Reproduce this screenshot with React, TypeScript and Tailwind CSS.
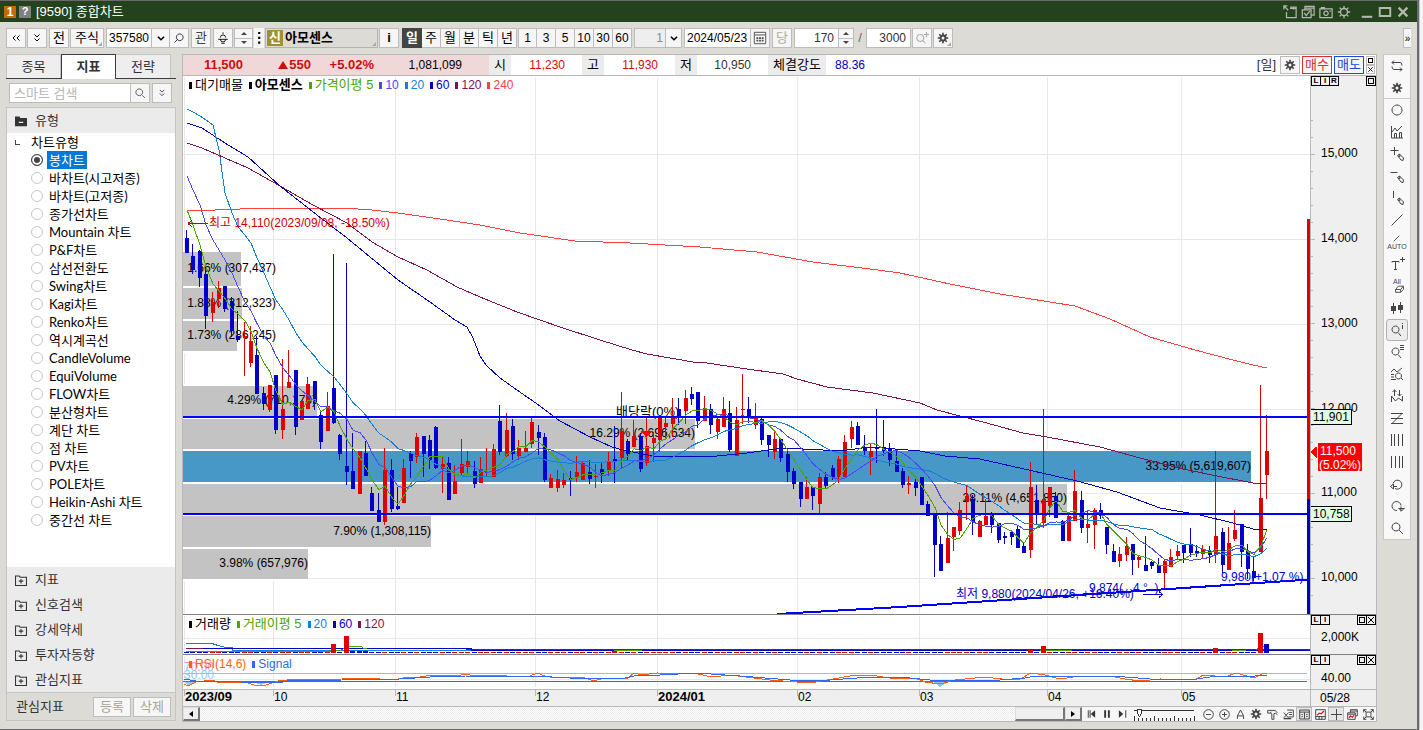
import React from "react";

type Bar = [string, number, number, number, number];

/* colour, high, body top, body bottom, low - in canvas units */
const BARS: Bar[] = `b 230 238 253 253|b 244 256 270 274|b 250 251 278 287|b 270 274 316 329|r 292 302 313 322|r 281 288 299 308|b 286 286 309 312|b 297 301 331 337|b 311 336 340 342|r 322 336 338 376|r 326 341 363 367|b 336 355 394 394|b 387 393 404 410|r 385 385 410 412|b 375 375 430 434|r 359 409 430 439|r 350 382 388 388|b 370 370 427 435|r 400 401 420 420|r 377 384 409 409|b 381 381 404 410|b 410 415 442 449|r 392 406 431 431|b 254 388 423 424|b 434 435 454 460|b 263 466 472 485|b 433 471 489 489|r 451 451 494 494|b 441 453 476 476|b 487 493 511 511|b 493 510 522 522|r 448 470 522 525|b 459 470 509 512|b 487 506 509 510|r 459 468 503 503|b 451 453 461 478|r 433 437 457 463|b 436 436 454 477|b 435 440 460 469|b 426 427 468 469|r 457 464 469 493|b 457 463 500 500|r 465 481 494 494|r 439 464 473 475|r 451 461 467 473|b 461 471 484 488|r 457 469 483 483|r 448 472 473 476|r 444 449 477 477|b 405 421 452 455|r 413 430 456 457|b 419 426 454 460|r 440 448 456 460|r 431 448 452 452|r 418 422 444 448|b 425 432 438 455|b 433 437 480 482|r 474 478 488 488|r 470 479 488 492|r 473 480 485 488|b 471 478 480 496|r 456 472 477 482|r 462 463 480 480|b 460 472 479 484|r 464 476 477 488|b 463 469 474 483|r 452 461 470 476|b 426 459 462 483|r 392 431 458 469|b 439 441 454 460|r 420 436 447 447|b 433 436 469 472|r 438 446 463 466|r 432 438 443 462|r 418 418 440 452|r 418 423 427 438|r 398 418 424 437|b 398 409 417 425|r 390 398 411 424|b 387 394 399 405|b 392 392 421 428|r 396 408 421 421|b 404 409 425 434|r 416 419 432 439|r 397 409 427 427|b 401 413 450 452|r 407 420 456 456|r 374 409 410 424|b 397 409 417 423|r 403 417 425 429|b 417 419 440 445|b 435 435 445 457|r 430 439 452 459|b 439 439 458 462|b 450 454 472 482|b 468 471 484 489|b 482 482 499 507|r 477 487 499 499|b 486 487 496 510|r 473 477 504 513|b 472 477 486 488|b 465 468 477 480|r 456 459 477 483|r 435 442 477 477|r 421 427 439 448|b 422 426 445 445|b 435 448 451 455|r 443 451 457 475|b 409 447 449 463|b 420 447 451 456|b 443 448 460 466|b 451 461 472 472|b 468 471 485 488|r 476 483 485 494|b 479 482 488 496|b 477 477 505 505|b 501 504 516 516|b 513 513 545 577|b 536 544 571 571|r 512 538 563 563|r 527 527 537 551|r 502 510 531 535|r 485 496 501 520|b 495 499 522 535|r 520 521 537 537|r 499 516 525 525|b 512 515 525 533|b 523 523 540 543|b 532 536 538 544|b 532 532 537 545|b 525 529 548 548|b 542 546 553 553|r 462 487 550 558|b 485 500 513 525|r 409 499 523 528|r 487 487 506 517|b 492 496 518 518|b 520 521 541 541|r 515 516 541 541|r 470 491 521 521|b 491 500 528 533|r 511 524 528 543|r 508 510 525 549|b 503 510 516 519|b 527 527 545 554|b 544 551 562 562|r 547 554 561 567|r 537 546 555 561|b 544 544 560 575|r 555 557 560 568|b 536 565 571 571|b 561 562 566 569|b 558 565 573 573|r 560 561 573 588|r 549 557 567 567|r 545 551 556 560|b 545 545 553 563|b 528 544 553 557|b 545 551 554 557|r 545 549 554 559|b 546 551 555 563|r 451 536 555 563|b 528 532 565 573|r 527 543 570 570|r 510 530 539 541|b 524 524 552 567|b 544 551 569 579|b 556 571 578 581|r 385 498 552 552|r 415 451 475 499`
  .split("|")
  .map((s) => {
    const [c, ...n] = s.split(" ");
    return [c, ...n.map(Number)] as Bar;
  });

const xAt = (i: number) => 187 + Math.round(i * 6.392);
const CLOSE = BARS.map((b) => (b[0] === "r" ? b[2] : b[3]));

function average(period: number, lead: number[]) {
  return CLOSE.map((_, i) => {
    const y = i < lead.length ? lead[i] : CLOSE.slice(i - period + 1, i + 1).reduce((a, b) => a + b, 0) / period;
    return `${xAt(i)},${Math.round(y * 10) / 10}`;
  }).join(" ");
}

const MA5 = average(5, [210, 225, 245, 267]);
const MA10 = average(10, [176, 190, 205, 225, 240, 250, 260, 273, 287]);
const MA20 = average(20, [109, 112, 116, 120, 125, 150, 193, 213, 227, 235, 243, 258, 273, 287, 300, 310, 320, 333, 342]);
const MA60 =
  "187,123 202,128 225,143 248,157 280,186 317,215 347,238 398,280 430,302 455,320 467,327 473,338 480,356 486,365 500,378 517,390 540,406 560,421 590,437 612,447 623,450 653,456 707,457 747,453 783,448 823,450 847,450 870,447 920,451 945,456 980,459 1033,471 1077,481 1117,492 1160,508 1200,515 1233,523 1253,529 1267,529";
const MA120 =
  "187,143 202,148 225,158 248,168 280,186 313,205 347,223 372,242 398,257 427,270 457,287 480,297 517,312 560,327 600,340 632,350 647,354 693,362 707,363 747,369 783,374 797,379 827,387 873,393 920,403 937,410 983,422 1023,433 1047,437 1100,447 1140,458 1183,469 1217,476 1253,483 1267,483";
const MA240 =
  "187,210 215,210 265,208 343,208 372,210 398,213 440,219 480,225 520,233 575,241 630,243 700,247 757,252 813,262 870,269 900,273 950,284 1000,294 1075,306 1110,319 1150,337 1195,350 1233,360 1253,365 1267,368";

const GRID_X = [184, 273, 395, 535, 657, 797, 919, 1047, 1181];
const GRID_Y = [154, 239, 324, 409, 493, 578];

const ZONES: [number, number, number, string, string, number][] = [
  [252, 34, 58, "#c3c3c3", "1.66% (307,437)", 276],
  [288, 31, 59, "#c3c3c3", "1.88% (312,323)", 276],
  [321, 30, 54, "#c3c3c3", "1.73% (286,245)", 276],
  [386, 30, 134, "#c3c3c3", "4.29% (710,178)", 316],
  [419, 30, 512, "#c3c3c3", "16.29% (2,696,634)", 695],
  [451, 31, 1068, "#4798c7", "33.95% (5,619,607)", 1251],
  [484, 30, 884, "#c3c3c3", "28.11% (4,651,850)", 1067],
  [516, 31, 248, "#c3c3c3", "7.90% (1,308,115)", 431],
  [549, 30, 125, "#c3c3c3", "3.98% (657,976)", 308],
];

function GridX({ y1, y2 }: { y1: number; y2: number }) {
  return (
    <>
      {GRID_X.map((x) => (
        <rect key={x} x={x} y={y1} width="1" height={y2 - y1} fill="#e8e8e8" />
      ))}
    </>
  );
}

function PriceChart() {
  return (
    <svg className="block h-[538px] w-full text-xs" role="img" aria-label="가격 차트">
      <g transform="translate(-183,-76)" shapeRendering="crispEdges">
        <GridX y1={77} y2={613} />
        {GRID_Y.map((y) => (
          <rect key={y} x="183" y={y} width="1127" height="1" fill="#e8e8e8" />
        ))}
        {ZONES.map(([y, h, w, c]) => (
          <g key={y}>
            <rect x="183" y={y - 2} width={w} height={h + 4} fill="#fff" />
            <rect x="183" y={y} width={w} height={h} fill={c} />
          </g>
        ))}
        {ZONES.map(([y, h, , , t, x]) => (
          <text key={y} x={x} y={y + h / 2 + 3} textAnchor="end" fill="#000">
            {t}
          </text>
        ))}
        <text x="616" y="416" fill="#000" className="text-[13px]">배당락(0%)</text>
        {BARS.map(([c, hi, top, bot, lo], i) => (
          <g key={i} fill={c === "r" ? "#e00000" : "#0000c8"}>
            <rect x={xAt(i) - 1} y={hi} width="1" height={Math.max(lo - hi, 1)} />
            <rect x={xAt(i) - 2} y={top} width="4" height={bot - top} />
          </g>
        ))}
        <g fill="none" strokeWidth="1">
          <polyline points={MA240} stroke="#ff4040" />
          <polyline points={MA120} stroke="#7b1450" />
          <polyline points={MA60} stroke="#0000c0" />
          <polyline points={MA20} stroke="#1080d8" />
          <polyline points={MA10} stroke="#4a4af8" />
          <polyline points={MA5} stroke="#4ea400" />
        </g>
        <rect x="646" y="418" width="1" height="14" fill="#e00000" />
        <path d="M641 431h11l-5.500 6z" fill="#f00" />
        <rect x="183" y="416" width="1124" height="2" fill="#00f" />
        <rect x="183" y="513" width="1124" height="2" fill="#00f" />
        <path d="M777 614L900 607L1310 579.500" stroke="#00f" strokeWidth="2" fill="none" />
        <rect x="1307" y="219" width="3" height="280" fill="#e00000" />
        <rect x="1307" y="499" width="3" height="116" fill="#0000c8" />
        <path d="M188 223.500h20M188 223.500l4-3M188 223.500l4 3" stroke="#d00000" fill="none" />
        <text x="209" y="227" fill="#d00000">최고 14,110(2023/09/08, -18.50%)</text>
        <text x="956" y="598" fill="#0000c0">최저 9,880(2024/04/26, +16.40%)</text>
        <path d="M1143 594.500h20M1163 594.500l-4-3M1163 594.500l-4 3" stroke="#0000c0" fill="none" />
        <text x="1089" y="592" fill="#0000e0">9,874({"\u00a0\u00a0\u00a0"}4 °{"\u00a0\u00a0"})</text>
        <text x="1221" y="581" fill="#0000e0">9,980(+1.07 %)</text>
      </g>
    </svg>
  );
}

const TICKS = Array.from({ length: 30 }, (_, i) => Math.round(120 + i * 16.95)).filter((y) => y < 612);

function PriceAxis() {
  return (
    <svg className="block h-[538px] w-full text-xs" role="img" aria-label="가격 축">
      <g transform="translate(-1311,-76)" shapeRendering="crispEdges">
        {TICKS.map((y) => (
          <rect key={y} x="1311" y={y} width={GRID_Y.some((g) => Math.abs(g - y) < 2) ? 4 : 2} height="1" fill="#b8b8b8" />
        ))}
        {["15,000", "14,000", "13,000", "12,000", "11,000", "10,000"].map((t, i) => (
          <text key={t} x="1321" y={[157, 242, 327, 412, 496, 581][i]} fill="#000">
            {t}
          </text>
        ))}
        <rect x="1311" y="409" width="41" height="16" fill="#000" />
        <rect x="1311" y="410" width="40" height="14" fill="#e0ffe0" />
        <text x="1313" y="421">11,901</text>
        <rect x="1311" y="506" width="41" height="16" fill="#000" />
        <rect x="1311" y="507" width="40" height="14" fill="#e0ffe0" />
        <text x="1313" y="518">10,758</text>
        <path d="M1310.500 452l6-5.500v11z" fill="#f00" />
        <rect x="1318" y="443" width="44" height="28" fill="#f00" />
        <text x="1320" y="455" fill="#fff">11,500</text>
        <text x="1319" y="469" fill="#fff">(5.02%)</text>
      </g>
    </svg>
  );
}

const VOL: Record<number, number> = { 23: 9, 25: 17, 26: 2, 27: 2, 28: 2, 67: 2, 132: 3, 134: 7, 161: 5, 168: 20, 169: 9 };

function VolumeChart() {
  return (
    <svg className="block h-[39px] w-full" role="img" aria-label="거래량 차트">
      <g transform="translate(-183,-615)" shapeRendering="crispEdges">
        <GridX y1={616} y2={653} />
        <rect x="183" y="638" width="1127" height="1" fill="#e8e8e8" />
        <path d="M186 643.500h26l6 2 8 2h6v3h240" stroke="#1080d8" fill="none" />
        <path d="M186 648.500h280l1 1h843" stroke="#7b1450" fill="none" />
        <path d="M203 648.500h268v2h839" stroke="#0000c0" fill="none" />
        <path d="M186 651.500h144v-1h10l9-4h12l3 2h3M614 650.500h28M1040 650.500h32M1232 650.500h14M1256 649.500l4-2 8-2" stroke="#4ea400" fill="none" />
        {BARS.map(([c], i) => {
          const h = VOL[i] ?? 1;
          const blue = [26, 27, 28, 169].includes(i) || (!VOL[i] && c === "b");
          return <rect key={i} x={xAt(i) - 3} y={653 - h} width="5" height={h} fill={blue ? "#0000c8" : "#e00000"} />;
        })}
      </g>
    </svg>
  );
}

function RsiChart() {
  return (
    <svg className="block h-[34px] w-full text-xs" role="img" aria-label="RSI 차트">
      <g transform="translate(-183,-655)" shapeRendering="crispEdges">
        <GridX y1={656} y2={687} />
        <rect x="183" y="679" width="1127" height="1" fill="#e8e8e8" />
        <text x="184" y="671" fill="#ff90c8">70.00</text>
        <text x="184" y="679" fill="#90c8ff">30.00</text>
        <path d="M184 681h12l-8 5zM250 681h22l-11 4zM932 681h18l-10 6z" fill="#90c8f0" />
        <rect x="183" y="673" width="1124" height="1" fill="#ff90c8" />
        <rect x="183" y="681" width="1124" height="1" fill="#f0f" />
        <polyline
          fill="none"
          stroke="#ff6010"
          points="184,684 188,686 196,682 212,680 220,683 245,682 254,685 266,685 278,681 287,680 342,679 357,678 376,678 384,680 398,679 409,677 420,677 432,675 456,676 466,674 474,676 500,675 513,677 530,676 537,673 545,676 556,678 572,677 585,678 594,681 604,678 628,678 634,673 642,675 657,673 698,674 712,677 730,675 770,680 810,683 850,676 870,675 890,678 915,678 925,682 940,684 955,680 985,677 1010,680 1020,679 1031,673 1045,675 1060,679 1080,676 1110,676 1125,679 1140,681 1160,679 1195,680 1203,675 1215,676 1225,677 1236,673 1254,678 1262,674 1267,673"
        />
        <polyline
          fill="none"
          stroke="#3068f8"
          points="184,679 196,681 240,682 278,683 287,681 342,680 400,679 430,677 466,676 530,676 552,677 570,678 593,679 625,678 634,676 660,675 696,673 740,676 790,680 830,680 870,677 900,677 930,680 960,680 1000,680 1025,678 1036,676 1100,676 1125,677 1150,679 1190,680 1210,677 1235,676 1255,676 1267,675"
        />
      </g>
    </svg>
  );
}

/* ---------- small glyphs ---------- */

function Icon({ d, fill, size = "h-4 w-4", sw = 1 }: { d: string; fill?: string; size?: string; sw?: number }) {
  return (
    <svg viewBox="0 0 16 16" className={`${size} shrink-0`} fill="none" stroke="currentColor" strokeWidth={sw} aria-hidden="true">
      <path d={d} />
      {fill && <path d={fill} fill="currentColor" stroke="none" />}
    </svg>
  );
}

const D = {
  left2: "M7.500 5.500L5 8l2.500 2.500M11.500 5.500L9 8l2.500 2.500",
  down2: "M5.500 4.500L8 7l2.500-2.500M5.500 8.500L8 11l2.500-2.500",
  search: "M11 11l3.500 3.500M7 2.500a4.500 4.500 0 1 0 .01 0z",
  searchR: "M6 10l-4 4M9 2.500a4.500 4.500 0 1 0 .01 0z",
  close: "M3 3l10 10M13 3L3 13",
};

function Gear({ size = "h-4 w-4", light }: { size?: string; light?: boolean }) {
  return (
    <svg viewBox="0 0 16 16" className={`${size} shrink-0`} fill="none" stroke="currentColor" aria-hidden="true">
      <circle cx="8" cy="8" r={light ? 4 : 3.3} strokeWidth={light ? 1.5 : 2.6} />
      <path
        d="M8 1v3M8 12v3M1 8h3M12 8h3M3 3l2 2M11 11l2 2M13 3l-2 2M5 11l-2 2"
        strokeWidth={light ? 1.6 : 2.2}
      />
    </svg>
  );
}

const SHAPE = "flex h-5 shrink-0 items-center justify-center";
const BTN = `${SHAPE} border border-[#bcbcbc] bg-[#f6f6f6]`;

function Btn({ w, label, children, className = "" }: { w: string; label?: string; children: React.ReactNode; className?: string }) {
  return (
    <button type="button" aria-label={label} className={`${BTN} ${w} ${className}`}>
      {children}
    </button>
  );
}

function Drop({ w, label }: { w: string; label: string }) {
  return (
    <Btn w={w} label={label} className="-ml-px">
      <Icon d="M4.500 6.500L8 10l3.500-3.500" sw={1.8} size="h-[14px] w-[14px]" />
    </Btn>
  );
}

function Spin({ w, label }: { w: string; label: string }) {
  return (
    <div className={`flex h-5 flex-col border border-[#bcbcbc] bg-[#f6f6f6] ${w}`}>
      <button type="button" aria-label={`${label} 증가`} className="flex flex-1 items-center justify-center border-b border-[#bcbcbc]">
        <svg viewBox="0 0 6 3" className="h-[3px] w-[6px]"><path d="M0 3l3-3 3 3z" fill="#444" /></svg>
      </button>
      <button type="button" aria-label={`${label} 감소`} className="flex flex-1 items-center justify-center">
        <svg viewBox="0 0 6 3" className="h-[3px] w-[6px]"><path d="M0 0l3 3 3-3z" fill="#444" /></svg>
      </button>
    </div>
  );
}

function Corner() {
  return (
    <svg viewBox="0 0 4 4" className="absolute right-px bottom-px h-1 w-1" aria-hidden="true">
      <path d="M4 0v4H0z" fill="#aaa" />
    </svg>
  );
}

function TitleBar() {
  return (
    <header className="flex h-[22px] items-center border-t border-[#6a6a6a] bg-[#24431c] pr-[7px] pl-1 text-[#b4b8b0]">
      <span className="flex h-3 w-3 items-center justify-center bg-[#c86800] text-xs font-bold text-white">1</span>
      <span className="ml-[3px] flex h-3 w-3 items-center justify-center bg-[#808080] text-[11px] font-bold text-white">?</span>
      <h1 className="ml-[5px] flex-1 text-[13px] text-white">[9590] 종합차트</h1>
      <div className="flex items-center gap-1">
        <button type="button" aria-label="분리"><Icon size="h-[14px] w-[14px]" sw={1.4} d="M1 1l5 5M1 5V1h4M4 8v6.500h11V4H8M9 4V2.500h6V5M12 3v2" /></button>
        <button type="button" aria-label="복사"><Icon size="h-[14px] w-[14px]" sw={1.4} d="M1.500 5.500h10v9h-10zM4.500 5V1.500h10.500v10h-3M4.500 3.500h10M3.500 9l2.500 3 4-5" /></button>
        <button type="button" aria-label="캡처"><Icon size="h-[14px] w-[14px]" sw={1.4} d="M1 4.500h14v10H1zM2 3h5M8 7a2.500 2.500 0 1 0 .01 0zM12 7h1.500" /></button>
        <button type="button" aria-label="설정"><Gear light size="h-[14px] w-[14px]" /></button>
      </div>
      <div className="ml-[9px] flex items-center gap-1">
        <button type="button" aria-label="최소화"><Icon d="M2 13.500h12" sw={2.4} size="h-[14px] w-[14px]" /></button>
        <button type="button" aria-label="최대화"><Icon d="M2 3.500h12v9H2z" sw={2.2} size="h-[14px] w-[14px]" /></button>
        <button type="button" aria-label="닫기"><Icon d={D.close} sw={2.6} size="h-[14px] w-[14px]" /></button>
      </div>
    </header>
  );
}

function Toolbar() {
  return (
    <div className="flex h-8 items-center pl-[6px] text-[13px] text-black">
      <div className="flex gap-px">
        <Btn w="w-5" label="이전"><Icon d={D.left2} /></Btn>
        <Btn w="w-5" label="펼치기"><Icon d={D.down2} /></Btn>
      </div>
      <Btn w="w-5" className="ml-[2px]">전</Btn>
      <Btn w="w-[34px]" className="relative ml-px">주식<Corner /></Btn>
      <input aria-label="종목코드" defaultValue="357580" className="ml-[2px] h-5 w-[46px] border border-[#bcbcbc] bg-white px-[2px] text-xs" />
      <Drop w="w-[19px]" label="종목 목록" />
      <Btn w="w-5" label="종목 검색" className="-ml-px"><Icon d={D.searchR} size="h-3 w-3" /></Btn>
      <Btn w="w-5" className="ml-[2px] text-[#444]">관</Btn>
      <Btn w="w-5" label="알림" className="ml-[2px]"><Icon size="h-[14px] w-[14px]" d="M8 1.500v2M5 7.500a3 3 0 0 1 6 0M2.500 9.500h11M5 9.500a3 3 0 0 0 6 0M6 14h4" /></Btn>
      <div className="ml-px"><Spin w="w-[19px]" label="종목" /></div>
      <button type="button" aria-label="더보기" className="ml-px flex h-5 w-[10px] items-center justify-center bg-[#f6f6f6]"><Icon d="" fill="M7 1h2.500v2.500H7zM7 6.500h2.500V9H7zM7 12h2.500v2.500H7z" size="h-[14px] w-[14px]" /></button>
      <div className="relative ml-px flex h-5 w-[113px] items-center border border-[#b4b4b4] bg-[#dcdbd6] pl-px font-bold">
        <span className="mr-[2px] flex h-4 w-4 items-center justify-center bg-[#a09030] text-white">신</span>
        아모센스
        <Corner />
      </div>
      <Btn w="w-5" label="정보" className="ml-px font-bold">i</Btn>
      <div className="ml-[3px] flex">
        <button type="button" aria-pressed="true" className={`${SHAPE} w-5 bg-[#444] font-bold text-white`}>일</button>
        {["주", "월", "분", "틱", "년"].map((t) => (
          <Btn key={t} w="w-[19px]" className="border-l-0">{t}</Btn>
        ))}
      </div>
      <div className="ml-px flex text-xs">
        {["1", "3", "5", "10", "30", "60"].map((t, i) => (
          <Btn key={t} w={i === 0 ? "w-[19px]" : "w-[19px] border-l-0"}>{t}</Btn>
        ))}
      </div>
      <input aria-label="주기" defaultValue="1" className="ml-[2px] h-5 w-8 border border-[#bcbcbc] bg-[#eee] pr-[2px] text-right text-xs text-[#888]" />
      <Drop w="w-[17px]" label="주기 목록" />
      <input aria-label="날짜" defaultValue="2024/05/23" className="ml-[2px] h-5 w-[67px] border border-[#bcbcbc] bg-white px-[2px] text-xs" />
      <Btn w="w-5" label="달력" className="-ml-px text-[#444]"><Icon size="h-[14px] w-[14px]" d="M1.500 1.500h13v13h-13zM2 4.500h12" fill="M4 7h2v2H4zM7 7h2v2H7zM10 7h2v2h-2zM4 10h2v2H4zM7 10h2v2H7zM10 10h2v2h-2z" /></Btn>
      <Btn w="w-5" className="ml-[2px] text-[#b0ac9c]">당</Btn>
      <input aria-label="봉 개수" defaultValue="170" className="ml-[2px] h-5 w-[45px] border border-[#bcbcbc] bg-white px-1 text-right text-xs text-[#333]" />
      <div className="-ml-px"><Spin w="w-4" label="봉 개수" /></div>
      <span className="mx-1 w-1 text-center text-[#666]">/</span>
      <input aria-label="최대 개수" defaultValue="3000" className="h-5 w-[45px] border border-[#bcbcbc] bg-white px-1 text-right text-xs text-[#333]" />
      <Btn w="w-5" label="확대 조회" className="ml-px text-[#aaa]"><Icon d="M9 11l3 3M6 4a4 4 0 1 0 .01 0zM13 1v6M10 4h6" sw={1.2} size="h-[14px] w-[14px]" /></Btn>
      <Btn w="w-5" label="차트 설정" className="relative ml-px text-[#444]"><Gear size="h-3 w-3" /><Corner /></Btn>
      <span className="flex-1" />
      <Btn w="w-2" label="더 펼치기" className="mr-[6px] border-r-0"><span className="text-[10px]">»</span></Btn>
    </div>
  );
}

const TYPES = ["봉차트", "바차트(시고저종)", "바차트(고저종)", "종가선차트", "Mountain 차트", "P&F차트", "삼선전환도", "Swing차트", "Kagi차트", "Renko차트", "역시계곡선", "CandleVolume", "EquiVolume", "FLOW차트", "분산형차트", "계단 차트", "점 차트", "PV차트", "POLE차트", "Heikin-Ashi 차트", "중간선 차트"];

function Sidebar() {
  return (
    <aside className="flex w-[170px] shrink-0 flex-col text-[13px] text-[#333]">
      <div role="tablist" className="flex h-[25px] border-b border-[#3c3c44]">
        <button type="button" role="tab" className="w-[55px] border border-b-0 border-[#c4c4c4] bg-[#eee]">종목</button>
        <button type="button" role="tab" aria-selected="true" className="-mb-px w-[55px] border border-b-0 border-[#3c3c44] bg-white font-bold">지표</button>
        <button type="button" role="tab" className="w-[55px] border border-b-0 border-l-0 border-[#c4c4c4] bg-[#eee]">전략</button>
      </div>
      <div className="flex px-[3px] py-1">
        <input aria-label="스마트 검색" placeholder="스마트 검색" className="h-5 w-[122px] border border-[#bcbcbc] bg-white px-1 placeholder:text-[#b8b8b8]" />
        <Btn w="w-5" label="검색" className="-ml-px"><Icon d={D.search} size="h-3 w-3" /></Btn>
        <Btn w="w-5" label="펼치기" className="ml-[2px]"><Icon d={D.down2} size="h-[14px] w-[14px]" /></Btn>
      </div>
      <div className="flex flex-col border border-[#c4c4c4] bg-white">
        <button type="button" className="flex h-[25px] items-center bg-[#ebebeb] pl-2">
          <Icon d="" fill="M0 2h6l1 2h9v11H0zM5 9v1.500h6V9z" size="h-3 w-3" />
          <span className="ml-2">유형</span>
        </button>
        <div className="h-[434px] text-black [font-family:Lato,'Noto_Sans_CJK_KR',sans-serif]">
          <div className="flex h-[18px] items-center">
            <span className="ml-2 h-[5px] w-[5px] border-b border-l border-[#444]" />
            <span className="ml-[11px] leading-4">차트유형</span>
          </div>
          {TYPES.map((t, i) => (
            <label key={t} className="flex h-[18px] items-center">
              <input
                type="radio"
                name="type"
                defaultChecked={i === 0}
                className="ml-[24px] h-3 w-3 appearance-none rounded-full border border-[#c8c8c8] bg-white checked:border-[#444] checked:bg-[#444] checked:shadow-[inset_0_0_0_2px_white]"
              />
              <span className={i === 0 ? "ml-1 bg-[#0078d7] px-[2px] leading-[18px] text-white" : "ml-1 px-[2px] leading-[18px]"}>{t}</span>
            </label>
          ))}
        </div>
        {["지표", "신호검색", "강세약세", "투자자동향", "관심지표"].map((t) => (
          <button key={t} type="button" className="flex h-[25px] items-center bg-[#ebebeb] pl-2">
            <Icon d="M.7 2.700h5l1 1.500h8.600v11H.7zM8 6.500v6M5 9.500h6" sw={1.4} size="h-3 w-3" />
            <span className="ml-2">{t}</span>
          </button>
        ))}
        <div className="flex h-[28px] items-center border-t border-[#c4c4c4] bg-[#dcdbd6] pr-[4px] pl-[9px]">
          <span className="flex-1">관심지표</span>
          <Btn w="w-[38px]" className="text-[#a8a498]">등록</Btn>
          <Btn w="w-[38px]" className="ml-[2px] text-[#a8a498]">삭제</Btn>
        </div>
      </div>
    </aside>
  );
}

function Quote({ k, v, c }: { k: string; v: string; c: string }) {
  return (
    <>
      <dt className="flex h-full w-[22px] items-center justify-center bg-[#ececec] text-[13px] text-black">{k}</dt>
      <dd className={`w-[71px] pr-[17px] text-right ${c}`}>{v}</dd>
    </>
  );
}

function QuoteBar() {
  return (
    <div className="flex h-[22px] items-center border-y border-[#b8b8bc] bg-white text-xs">
      <div className="flex h-full w-[306px] items-center bg-[#f0d8d8] text-[13px] font-bold text-[#d00c0c]">
        <span className="w-[60px] text-right">11,500</span>
        <span className="flex w-[68px] items-center justify-end"><svg viewBox="0 0 10 8" className="mr-px h-2 w-[10px]"><path d="M0 8l5-8 5 8z" fill="#d00c0c" /></svg>550</span>
        <span className="w-[63px] text-right">+5.02%</span>
        <span className="w-[88px] text-right text-xs font-normal text-black">1,081,099</span>
      </div>
      <dl className="flex h-full flex-1 items-center">
        <Quote k="시" v="11,230" c="text-[#d00c0c]" />
        <Quote k="고" v="11,930" c="text-[#d00c0c]" />
        <Quote k="저" v="10,950" c="text-[#333]" />
        <dt className="flex h-full w-[58px] items-center justify-center bg-[#ececec] text-[13px] text-black">체결강도</dt>
        <dd className="pl-[9px] text-[#0000c0]">88.36</dd>
      </dl>
      <span className="mr-[4px] text-[13px] text-[#333]">[일]</span>
      <button type="button" aria-label="설정" className="flex h-[18px] w-5 items-center justify-center border border-[#bcbcbc] bg-[#f6f6f6] text-[#444]"><Gear size="h-3 w-3" /></button>
      <button type="button" className="ml-[2px] h-[18px] w-[30px] border border-[#d83030] bg-[#f6f6f6] text-[13px] leading-4 text-[#d83030]">매수</button>
      <button type="button" className="ml-[2px] h-[18px] w-[30px] border border-[#2048d8] bg-[#f6f6f6] text-[13px] leading-4 text-[#2048d8]">매도</button>
      <div className="mr-px ml-[2px] flex flex-col">
        <button type="button" aria-label="최대화" className="flex h-[9px] w-[9px] items-center justify-center border border-[#bcbcbc]"><span className="h-[5px] w-[5px] border border-black" /></button>
        <button type="button" aria-label="닫기" className="flex h-[9px] w-[9px] items-center justify-center border border-[#bcbcbc]"><Icon d={D.close} size="h-[7px] w-[7px]" sw={2} /></button>
      </div>
    </div>
  );
}

function Marks({ items, end }: { items: string[]; end: string[] }) {
  const box = "-ml-px flex h-[10px] w-[10px] items-center justify-center border border-black bg-[#efefef] text-[8px] leading-none font-bold";
  return (
    <div className="absolute inset-x-0 top-0 flex justify-between pl-px">
      <div className="flex">{items.map((t) => <button key={t} type="button" className={box}>{t}</button>)}</div>
      <div className="flex">
        {end.map((t) => (
          <button key={t} type="button" aria-label={t} className={box}>
            {t === "확대" ? <span className="h-[6px] w-[6px] border border-black" /> : <Icon d="M2 2l12 12M14 2L2 14" sw={2} size="h-2 w-2" />}
          </button>
        ))}
      </div>
    </div>
  );
}

function Legend({ items }: { items: [string, string][] }) {
  return (
    <ul className="absolute top-0 left-0 flex gap-[6px] pl-[6px] text-[13px] leading-[18px]">
      {items.map(([t, c]) => (
        <li key={t} className={`flex items-center gap-[3px] ${c} ${t === "아모센스" ? "font-bold" : ""} ${/^[\dRS]/.test(t) ? "text-xs leading-[18px]" : ""}`}>
          <span className="h-[7px] w-[3px] bg-current" />
          {t}
        </li>
      ))}
    </ul>
  );
}

function Row({ children, axis, line }: { children: React.ReactNode; axis: React.ReactNode; line: string }) {
  return (
    <div className={`flex border-b ${line}`}>
      <div className="relative min-w-0 flex-1 overflow-hidden bg-white">{children}</div>
      <div className="relative w-[66px] shrink-0 border-l border-[#b8b8b8] bg-[#efefef]">{axis}</div>
    </div>
  );
}

const BOTTOM: [string, string, string?][] = [
  ["축소", "M8 1a7 7 0 1 0 .01 0zM4.500 8h7"],
  ["확대", "M8 1a7 7 0 1 0 .01 0zM4.500 8h7M8 4.500v7"],
  ["글자", "M3.500 14.500V10L8 1.500l4.500 8.500v4.500M4 10h8"],
  ["설정", ""],
  ["도구", "M1 2h11l3 3.500M1 2v4h4l2 1v8h3V7l2-1 3 2M5 6l1-2"],
  ["삭제", "M6 1.500h9v10H8M1 5l7 8M8 5l-7 8M9 5h4M9 8h4", "M1 13h11v2H1z"],
  ["표", "M1 1.500h14v13H1zM1 4.500h14M8 5v9M3.500 8h2M3.500 11h2M10.500 8h2M10.500 11h2"],
  ["차트", "M1 1h14v14H1zM1 11h14M6 11v4M10 11v4"],
  ["십자", "M8 0v16M0 8h16"],
  ["창", "M1 5.500h11v9.500H1zM5 5V1h10v9h-3M5 3h10M1 7.500h11"],
  ["전체", "M1 5V1h4M11 1h4v4M15 11v4h-4M5 15H1v-4M4.500 4.500h7v7h-7zM1 1l3.500 3.500M15 1l-3.500 3.500M15 15l-3.500-3.500M1 15l3.500-3.500"],
];

function ScrollRow() {
  const knob = "flex items-center justify-center border-t border-r-2 border-b-2 border-l border-t-[#ddd] border-r-[#777] border-b-[#777] border-l-[#ddd] bg-[#efefef]";
  return (
    <div className="flex h-[15px] items-stretch border-b border-[#b8b8b8] bg-[#f6f6f6] text-[#333]">
      <button type="button" aria-label="왼쪽으로" className={`w-[17px] ${knob}`}><svg viewBox="0 0 4 6" className="h-[6px] w-1"><path d="M4 0v6L0 3z" /></svg></button>
      <div className="flex-1 bg-[repeating-conic-gradient(#ececec_0_25%,#fff_0_50%)] bg-[length:2px_2px]" />
      <div className={`w-[50px] ${knob}`} />
      <button type="button" aria-label="오른쪽으로" className={`w-[17px] ${knob}`}><svg viewBox="0 0 4 6" className="h-[6px] w-1"><path d="M0 0v6l4-3z" /></svg></button>
      <div className="flex w-[50px] items-center justify-evenly">
        <button type="button" aria-label="처음"><Icon size="h-[10px] w-[10px]" d="M2 2v12M5 2v12" sw={1.5} fill="M13 2v12L6 8z" /></button>
        <button type="button" aria-label="멈춤"><Icon size="h-[10px] w-[10px]" d="M5 2v12M11 2v12" sw={3} /></button>
        <button type="button" aria-label="끝"><Icon size="h-[10px] w-[10px]" d="M14 2v12" sw={1.5} fill="M3 2v12l7-6z" /></button>
      </div>
      <svg className="h-[14px] w-[68px] shrink-0" shapeRendering="crispEdges" role="img" aria-label="배율">
        <path d="M2 3.500h60" stroke="#333" />
        {Array.from({ length: 16 }, (_, i) => (
          <rect key={i} x={2 + i * 4} y={i % 5 === 0 ? 9 : 11} width="1" height={i % 5 === 0 ? 5 : 3} fill="#333" />
        ))}
        <path d="M5.500 2.500h4v4l-2 3-2-3z" fill="#fff" stroke="#333" />
      </svg>
      <div className="flex w-[176px] items-center text-[#444]">
        {BOTTOM.map(([l, d, f]) => (
          <button key={l} type="button" aria-label={l} className={`flex h-[14px] w-4 items-center justify-center ${l === "표" || l === "십자" ? "border border-[#bbb] bg-[#e6e6e6]" : ""}`}>
            {l === "설정" ? (
              <Gear size="h-3 w-3" />
            ) : (
              <span className="relative">
                <Icon d={d} fill={f} size="h-[11px] w-[11px]" sw={1.4} />
                {(l === "차트" || l === "창") && (
                  <svg viewBox="0 0 16 16" className="absolute inset-0 h-[11px] w-[11px]" fill="none" stroke="#d02020" strokeWidth="1.800">
                    <path d={l === "차트" ? "M3 9l3-3 3 1 4-4" : "M3 13l2-3 3 2 2-3"} />
                  </svg>
                )}
              </span>
            )}
          </button>
        ))}
      </div>
    </div>
  );
}

function ChartPanel() {
  return (
    <section className="flex min-w-0 flex-1 flex-col border-x border-[#b8b8bc]">
      <QuoteBar />
      <Row line="border-[#808080]" axis={<><PriceAxis /><Marks items={["L", "I", "R"]} end={["확대"]} /></>}>
        <PriceChart />
        <Legend items={[["대기매물", "text-black"], ["아모센스", "text-black"], ["가격이평 5", "text-[#4ea400]"], ["10", "text-[#4a4af8]"], ["20", "text-[#1080d8]"], ["60", "text-[#0000c0]"], ["120", "text-[#7b1450]"], ["240", "text-[#ff4040]"]]} />
      </Row>
      <Row line="border-[#808080]" axis={<><span className="absolute top-[14px] left-[10px] text-xs">2,000K</span><Marks items={["L", "I"]} end={["확대", "닫기"]} /></>}>
        <VolumeChart />
        <Legend items={[["거래량", "text-black"], ["거래이평 5", "text-[#4ea400]"], ["20", "text-[#1080d8]"], ["60", "text-[#0000c0]"], ["120", "text-[#7b1450]"]]} />
      </Row>
      <Row line="border-[#b8b8b8]" axis={<><span className="absolute top-[15px] left-[10px] text-xs">40.00</span><Marks items={["L", "I"]} end={["확대", "닫기"]} /></>}>
        <RsiChart />
        <Legend items={[["RSI(14,6)", "text-[#ff6010]"], ["Signal", "text-[#3068f8]"]]} />
      </Row>
      <Row line="border-[#b8b8b8]" axis={<span className="block pl-[9px] text-xs leading-4">05/28</span>}>
        <svg className="block h-4 w-full bg-[#efefef] text-xs" role="img" aria-label="날짜 축">
          <g transform="translate(-183,-690)">
            {["2023/09", "10", "11", "12", "2024/01", "02", "03", "04", "05"].map((t, i) => (
              <g key={t}>
                <rect x={GRID_X[i]} y="690" width="1" height="6" fill="#b8b8b8" />
                <text x={GRID_X[i] + 1} y="701" className={t.length > 2 ? "text-[13px] font-bold" : ""}>{t}</text>
              </g>
            ))}
          </g>
        </svg>
      </Row>
      <ScrollRow />
    </section>
  );
}

const PEN = "M8.500 9.500l2-1.500 4 4-.5 2.500-2-.5zM9 10l2 .5M10.500 8l.5 2.500";

const TOOLS: [string, string, string?][] = [
  ["새로고침", "M5 2.500L3 4.500l2 2M3 4.500h8q2 0 2 3M11 9.500l2 2-2 2M13 11.500H5q-2 0-2-3"],
  ["설정", ""],
  ["원", "M8 3a5 5 0 1 0 .01 0z"],
  ["보조지표", "M2.500 2v12H14M3 8l3-4 2 3 5-5M5.500 14V9.500h2V14M10.500 14V8.500h2V14"],
  ["십자선", `M5.500 1v8M1.500 4.500h8${PEN}`],
  ["수평선", `M1.500 4.500h7${PEN}`],
  ["수직선", `M4.500 1v7${PEN}`],
  ["추세선", "M2.500 13.500l11-11"],
  ["자동추세선", "auto"],
  ["텍스트", "M3 6.500V5.500h7v1M6.500 5.500v8M5 13.500h3M13.500 1v5M11 3.500h5"],
  ["모두지우기", "all"],
  ["봉", "M4.500 3v11M11.500 2v11", "M2 6h5v5H2zM9 5h5v5H9z"],
  ["돋보기정보", "M9 10.500l3 3.500M6.500 4a3.500 3.500 0 1 0 .01 0zM13.500 1v1M13.500 3v4"],
  ["돋보기목록", "M9 10.500l3 3.500M6.500 4a3.500 3.500 0 1 0 .01 0zM11 1.500h4M11 3.500h4M11 5.500h4"],
  ["지표검색", "M2 6l3-3 3 3 5-4M2 8.500h3M2 11h3M2 13.500h5M9.500 7a3 3 0 1 0 .01 0zM12 12l2 2"],
  ["신호", "M5.500 8V1.500M3.500 4l2-2 2 2M10.500 2v6M8.500 6l2 2 2-2M2.500 14V8l4 5 3-3 4 3V8"],
  ["피보나치", "M2 3.500h12M2 8.500h12M2 13.500h12M13 3.500l-10 10"],
  ["시간대", "M2.500 2v12M5.500 2v12M9.500 2v12M13.500 2v12"],
  ["등분선", "M2.500 2v12M6.500 2v12M10.500 2v12M13.500 2v12"],
  ["되돌리기", "M6 12.500a4.500 4.500 0 1 0-2-5M1.500 10.500l3-2.500v5zM4 10.500h4"],
  ["다시하기", "M8 12.500a4.500 4.500 0 1 1 4-5M12 8.500v5M9.500 10.500h6M10 10.500l2.500 2.500 2.500-2.500"],
  ["찾기", "M10 10l4 4M7 3a4 4 0 1 0 .01 0z"],
];

function ToolStrip() {
  return (
    <nav aria-label="그리기 도구" className="flex w-7 shrink-0 flex-col self-start border border-[#c8c8c8] bg-[#f8f8f8] text-[#444]">
      {TOOLS.map(([l, d, f], i) => (
        <button
          key={l}
          type="button"
          aria-label={l}
          className={`flex h-[22px] items-center justify-center ${i === 1 ? "border-b border-[#c8c8c8]" : ""} ${i === 12 ? "mx-[2px] rounded-[3px] border border-[#b0b0b0] bg-[#ececec]" : ""}`}
        >
          {i === 1 ? (
            <Gear size="h-3 w-3" />
          ) : d === "auto" ? (
            <span className="flex flex-col items-center text-[7px] leading-[7px]"><Icon d="M3 13L13 3" size="h-[9px] w-[9px]" sw={1.6} />AUTO</span>
          ) : d === "all" ? (
            <span className="flex flex-col text-[7px] leading-[6px]"><span>All</span><Icon d="M1 8l5-6h9l-5 6zM1 8v5h9V8M10 13l5-5V2" size="ml-[5px] h-[9px] w-[9px]" sw={1.6} /></span>
          ) : (
            <Icon d={d} fill={f} />
          )}
        </button>
      ))}
    </nav>
  );
}

export default function App() {
  return (
    <div className="flex bg-[#f4f4f6] text-black [font-family:'Liberation_Sans','Noto_Sans_CJK_KR',sans-serif]">
      <div className="min-w-0 flex-1 border-r-2 border-[#6c6c70] bg-[#dcdbd6]">
        <TitleBar />
        <Toolbar />
        <main className="flex px-[6px]">
          <Sidebar />
          <div className="ml-[6px] flex min-w-0 flex-1 gap-[6px]">
            <ChartPanel />
            <ToolStrip />
          </div>
        </main>
        <footer className="h-[8px] border-b border-[#6c6c70]" />
      </div>
      <div className="w-1 shrink-0 border-l border-[#c8c8cc]" />
    </div>
  );
}
